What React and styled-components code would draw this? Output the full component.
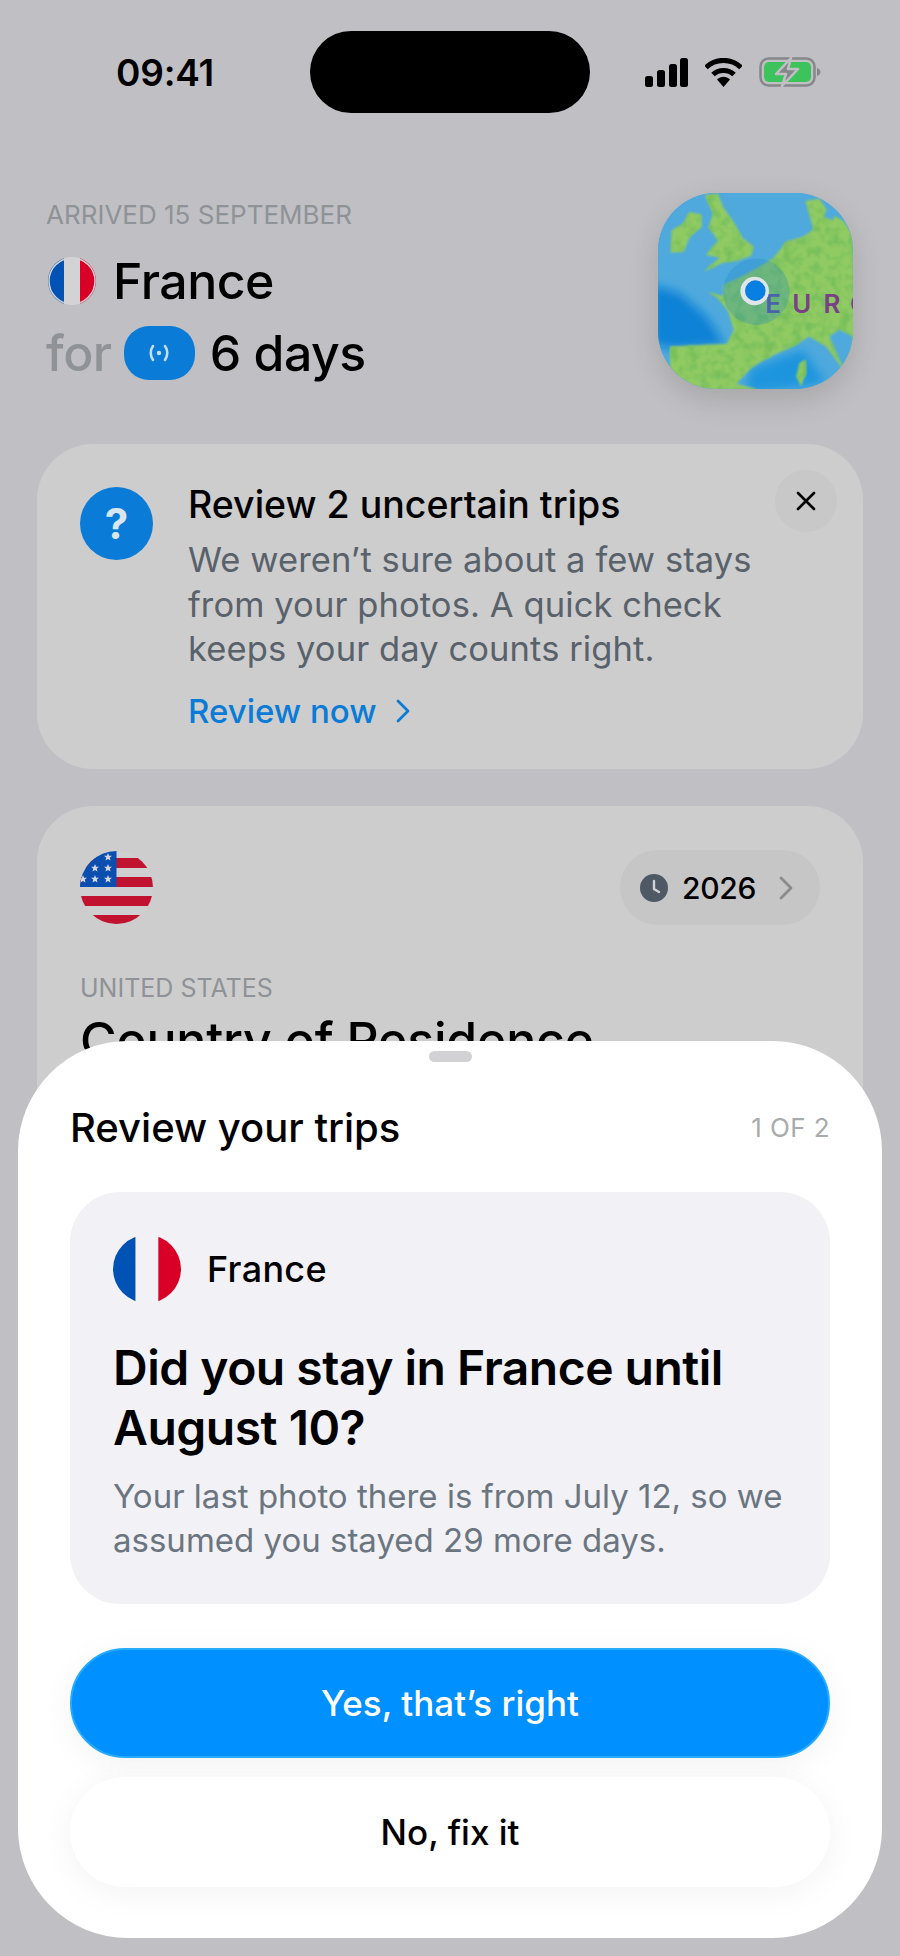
import styled, { createGlobalStyle } from "styled-components";

const GlobalStyle = createGlobalStyle`
  html, body {
    margin: 0;
    padding: 0;
    background: #c0c0c4;
  }
  * {
    box-sizing: border-box;
  }
`;

const Page = styled.div`
  position: relative;
  width: 900px;
  height: 1956px;
  overflow: hidden;
  background: #c0c0c4;
  color: #000;
  font-family: Inter, "Noto Sans", sans-serif;
`;

const StatusBar = styled.div`
  display: grid;
  grid-template-columns: 310px 280px 1fr;
  align-items: center;
  padding-top: 31px;
`;

const Time = styled.div`
  padding-left: 116px;
  font-size: 37px;
  font-weight: 600;
  letter-spacing: -0.2px;
`;

const Island = styled.div`
  height: 82px;
  border-radius: 41px;
  background: #000;
`;

const StatusIcons = styled.div`
  display: flex;
  align-items: center;
  gap: 17px;
  padding-left: 55px;
`;

const Header = styled.div`
  display: flex;
  justify-content: space-between;
  margin-top: 80px;
  padding: 0 47px 0 46px;
`;

const HeaderText = styled.div`
  padding-top: 10px;
`;

const Overline = styled.div`
  font-size: 26px;
  line-height: 24px;
  color: #8f9296;
`;

const BigRow = styled.div`
  display: flex;
  align-items: center;
  height: 54px;
  margin-top: ${(p) => p.$top}px;
  font-size: 50px;
  font-weight: 500;
  letter-spacing: -0.5px;
`;

const For = styled.span`
  color: #8f9296;
  margin-right: 12px;
`;

const Badge = styled.div`
  display: flex;
  align-items: center;
  justify-content: center;
  width: 71px;
  height: 54px;
  margin-right: 15px;
  border-radius: 25px;
  background: #0a7bd6;
`;

const FlagSlot = styled.div`
  display: flex;
  flex: none;
  margin-left: 2px;
  margin-right: 17px;
`;

const MapTile = styled.div`
  width: 195px;
  height: 196px;
  border-radius: 58px;
  overflow: hidden;
  box-shadow: 0 10px 30px rgba(0, 0, 0, 0.14);
  background: #4da9dc;
`;

const Card = styled.div`
  position: relative;
  margin: ${(p) => p.$top}px 37px 0;
  height: ${(p) => p.$height}px;
  border-radius: 56px;
  background: #cdcdcd;
`;

const BannerBody = styled.div`
  display: flex;
  gap: 35px;
  padding: 43px 0 0 43px;
`;

const HelpCircle = styled.div`
  display: flex;
  align-items: center;
  justify-content: center;
  flex: none;
  width: 73px;
  height: 73px;
  border-radius: 50%;
  background: #0a7bd6;
  color: #d8e6f2;
  font-size: 42px;
  font-weight: 700;
`;

const BannerText = styled.div`
  margin-top: -4px;
`;

const BannerTitle = styled.div`
  font-size: 37.500px;
  line-height: 44px;
  font-weight: 500;
`;

const BannerCopy = styled.div`
  margin-top: 11px;
  font-size: 34.500px;
  line-height: 44.500px;
  letter-spacing: 0.1px;
  color: #59616b;
`;

const ReviewLink = styled.div`
  display: flex;
  align-items: center;
  gap: 18px;
  margin-top: 17px;
  font-size: 33px;
  line-height: 44px;
  font-weight: 500;
  color: #0a7bd6;
`;

const CloseButton = styled.div`
  position: absolute;
  top: 26px;
  right: 26px;
  display: flex;
  align-items: center;
  justify-content: center;
  width: 62px;
  height: 62px;
  border-radius: 50%;
  background: #c8c8c9;
`;

const ResidenceBody = styled.div`
  padding: 44px 43px 0;
`;

const ResidenceTop = styled.div`
  display: flex;
  align-items: center;
  justify-content: space-between;
`;

const YearPill = styled.div`
  display: flex;
  align-items: center;
  width: 200px;
  height: 75px;
  padding-left: 20px;
  border-radius: 38px;
  background: #c6c6c7;
  font-size: 30px;
  font-weight: 500;
  letter-spacing: -0.3px;
`;

const YearText = styled.span`
  margin: 0 22px 0 14px;
`;

const ResidenceLabel = styled.div`
  margin: 51px 0 0;
  font-size: 25px;
  line-height: 24px;
  color: #8f9296;
`;

const ResidenceTitle = styled.div`
  margin: 12px 0 0;
  font-size: 50px;
  line-height: 56px;
  font-weight: 500;
  letter-spacing: -0.2px;
`;

const Sheet = styled.div`
  position: absolute;
  top: 1041px;
  left: 18px;
  width: 864px;
  height: 897px;
  padding: 10px 52px 0;
  border-radius: 110px;
  background: #fff;
`;

const Grabber = styled.div`
  width: 43px;
  height: 11px;
  margin: 0 auto 42px;
  border-radius: 6px;
  background: #d2d2d4;
`;

const SheetHeader = styled.div`
  display: flex;
  align-items: center;
  justify-content: space-between;
  height: 46px;
`;

const SheetTitle = styled.div`
  font-size: 40px;
  font-weight: 500;
`;

const Counter = styled.div`
  font-size: 26px;
  letter-spacing: 0.4px;
  color: #a8abae;
`;

const TripCard = styled.div`
  height: 412px;
  margin-top: 42px;
  padding: 43px 43px 0;
  border-radius: 50px;
  background: #f1f1f6;
`;

const TripCountry = styled.div`
  display: flex;
  align-items: center;
  gap: 26px;
  font-size: 36px;
  font-weight: 500;
  letter-spacing: 0.3px;
`;

const TripQuestion = styled.div`
  margin-top: 35px;
  font-size: 48px;
  line-height: 60px;
  font-weight: 600;
  letter-spacing: -0.5px;
`;

const TripNote = styled.div`
  margin-top: 17px;
  font-size: 33px;
  line-height: 43.500px;
  color: #6b7580;
`;

const Actions = styled.div`
  display: flex;
  flex-direction: column;
  gap: 19px;
  margin-top: 44px;
`;

const ActionButton = styled.div`
  display: flex;
  align-items: center;
  justify-content: center;
  height: 110px;
  border-radius: 55px;
  font-size: 35px;
  font-weight: 500;
  color: ${(p) => (p.$primary ? "#fff" : "#000")};
  background: ${(p) => (p.$primary ? "#0090ff" : "#fff")};
  border: ${(p) => (p.$primary ? "2px solid #25aaff" : "none")};
  box-shadow: 0 6px 34px rgba(0, 0, 0, 0.05);
`;

const SignalIcon = () => (
  <svg width="43" height="29" viewBox="0 0 43 29">
    <rect x="0" y="18" width="8" height="11" rx="2.500" />
    <rect x="12" y="12" width="8" height="17" rx="2.500" />
    <rect x="24" y="6" width="8" height="23" rx="2.500" />
    <rect x="35" y="0" width="8" height="29" rx="2.500" />
  </svg>
);

const WifiIcon = () => (
  <svg width="37" height="29" viewBox="0 0 37 29">
    <path d="M1 9.500C10.500 0 26.500 0 36 9.500" fill="none" stroke="#000" strokeWidth="5" />
    <path d="M8 16.500C13.500 11 23.500 11 29 16.500" fill="none" stroke="#000" strokeWidth="5" />
    <path d="M12 21.500C16 17.800 21 17.800 25 21.500L18.500 29Z" />
  </svg>
);

const BatteryIcon = () => (
  <svg width="62" height="30" viewBox="0 0 62 30">
    <rect x="1.500" y="1.500" width="54" height="27" rx="8" fill="none" stroke="#85878a" strokeWidth="2.500" />
    <rect x="5" y="5" width="47" height="20" rx="5" fill="#3dc35c" />
    <path d="M58 11C60.500 12 61.500 13.500 61.500 15C61.500 16.500 60.500 18 58 19Z" fill="#85878a" />
    <path d="M32 1L17 17H27L23 29L39 12H29Z" fill="#85878a" stroke="#c0c0c4" strokeWidth="2.500" strokeLinejoin="round" />
  </svg>
);

const BroadcastIcon = () => (
  <svg width="22" height="24" viewBox="0 0 22 24" fill="none" stroke="#c9dcee" strokeWidth="2.600" strokeLinecap="round">
    <path d="M5 5C2 9 2 15 5 19" />
    <path d="M17 5C20 9 20 15 17 19" />
    <circle cx="11" cy="12" r="2.200" fill="#c9dcee" stroke="none" />
  </svg>
);

const FranceFlag = ({ size, white = "#f2f2f6", ring }) => (
  <svg width={size} height={size} viewBox="0 0 48 48">
    <defs>
      <clipPath id={`fr-${size}`}>
        <circle cx="24" cy="24" r="24" />
      </clipPath>
    </defs>
    <g clipPath={`url(#fr-${size})`}>
      <rect width="16" height="48" fill="#0052b4" />
      <rect x="16" width="16" height="48" fill={white} />
      <rect x="32" width="16" height="48" fill="#d80027" />
    </g>
    {ring && <circle cx="24" cy="24" r="23" fill="none" stroke="#d3d3d6" strokeWidth="1.500" />}
  </svg>
);

const UsFlag = () => {
  const stars = [
    [28, 6],
    [15, 17],
    [28, 17],
    [3, 28],
    [15, 28],
    [28, 28],
  ];
  return (
    <svg width="73" height="73" viewBox="0 0 73 73">
      <defs>
        <clipPath id="us-clip">
          <circle cx="36.500" cy="36.500" r="36.500" />
        </clipPath>
      </defs>
      <g clipPath="url(#us-clip)">
        <rect width="73" height="73" fill="#cfcfd1" />
        <rect y="7" width="73" height="10" fill="#c1122f" />
        <rect y="26" width="73" height="10" fill="#c1122f" />
        <rect y="45" width="73" height="10" fill="#c1122f" />
        <rect y="64" width="73" height="9" fill="#c1122f" />
        <rect width="36.500" height="36" fill="#0a4fb0" />
        {stars.map(([x, y]) => (
          <path
            key={`${x}-${y}`}
            transform={`translate(${x} ${y})`}
            d="M0 -4L1.100 -1.300L4 -1.200L1.800 .6L2.500 3.400L0 1.900L-2.500 3.400L-1.800 .6L-4 -1.200L-1.100 -1.300Z"
            fill="#d6d6da"
          />
        ))}
      </g>
    </svg>
  );
};

const labelLetters = [
  ["E", 377, "#4a62a8"],
  ["U", 458, "#7a3f86"],
  ["R", 552, "#7a3f86"],
  ["O", 632, "#7a3f86"],
];

const EuropeMap = () => (
  <svg width="195" height="196" viewBox="55 68 585 590">
    <defs>
      <filter id="soft">
        <feGaussianBlur stdDeviation="3" />
      </filter>
      <filter id="softer">
        <feGaussianBlur stdDeviation="14" />
      </filter>
      <filter id="mottle" x="0" y="0" width="100%" height="100%" colorInterpolationFilters="sRGB">
        <feTurbulence type="fractalNoise" baseFrequency="0.035" numOctaves="2" seed="4" result="noise" />
        <feColorMatrix
          in="noise"
          type="matrix"
          values="0 0 0 0 0.47  0 0 0 0 0.75  0 0 0 0 0.36  0 0 0 3 -1.300"
          result="patches"
        />
        <feGaussianBlur in="SourceGraphic" stdDeviation="2.500" result="land" />
        <feComposite in="patches" in2="land" operator="in" result="inked" />
        <feMerge>
          <feMergeNode in="land" />
          <feMergeNode in="inked" />
        </feMerge>
      </filter>
    </defs>
    <rect x="55" y="68" width="585" height="590" fill="#4fa9dd" />
    <g filter="url(#softer)">
      <path d="M40 345L120 370L200 440L255 525L100 535L40 525Z" fill="#0d82d6" />
      <path d="M330 600L430 560L490 540L560 640L320 670Z" fill="#1f95de" />
    </g>
    <g filter="url(#mottle)" fill="#8fca62">
      <path d="M95 180L130 160L148 125L185 132L186 170L150 200L132 245L92 248Z" />
      <path d="M195 75L235 70L250 110L285 160L310 205L342 228L335 258L290 272L250 278L190 305L240 262L198 255L235 212L206 170L220 130Z" />
      <path d="M203 365L250 378L252 345L300 322L345 298L400 265L440 215L490 200L522 178L498 92L540 85L570 130L610 150L640 190L650 610L610 598L560 530L510 500L460 530L420 548L375 570L335 595L290 642L360 660L90 660L90 530L262 522L282 480L265 425L235 385Z" />
      <path d="M480 580L498 570L500 610L485 650L470 620Z" />
    </g>
    <path d="M560 118L590 125L580 150L555 140Z" fill="#4fa9dd" filter="url(#soft)" />
    <path d="M610 120L625 130L612 148L600 135Z" fill="#4fa9dd" filter="url(#soft)" />
    <path d="M570 500L600 480L640 500L640 600L610 590Z" fill="#4fa9dd" filter="url(#soft)" />
    <circle cx="350" cy="365" r="100" fill="#1a86c8" fillOpacity="0.28" />
    {labelLetters.map(([letter, x, color]) => (
      <text key={letter} x={x} y="430" fontFamily="Inter, sans-serif" fontSize="78" fontWeight="600" fill={color}>
        {letter}
      </text>
    ))}
    <circle cx="345" cy="363" r="43" fill="#dfe6ea" />
    <circle cx="347" cy="362" r="31" fill="#0a7fe2" />
  </svg>
);

const CloseIcon = () => (
  <svg width="22" height="22" viewBox="0 0 22 22" fill="none" stroke="#000" strokeWidth="2.600" strokeLinecap="round">
    <path d="M3 3L19 19M19 3L3 19" />
  </svg>
);

const Chevron = ({ color }) => (
  <svg width="16" height="28" viewBox="0 0 16 28" fill="none" stroke={color} strokeWidth="2.800" strokeLinecap="round" strokeLinejoin="round">
    <path d="M3 4L13 14L3 24" />
  </svg>
);

const ClockIcon = () => (
  <svg width="28" height="28" viewBox="0 0 28 28">
    <circle cx="14" cy="14" r="14" fill="#4f5965" />
    <path d="M14 7V15L19 18" fill="none" stroke="#cfd2d4" strokeWidth="2.400" strokeLinecap="round" />
  </svg>
);

export default function App() {
  return (
    <Page>
      <GlobalStyle />
      <StatusBar>
        <Time>09:41</Time>
        <Island />
        <StatusIcons>
          <SignalIcon />
          <WifiIcon />
          <BatteryIcon />
        </StatusIcons>
      </StatusBar>

      <Header>
        <HeaderText>
          <Overline>ARRIVED 15 SEPTEMBER</Overline>
          <BigRow $top={27}>
            <FlagSlot>
              <FranceFlag size={48} white="#d3d3d6" ring />
            </FlagSlot>
            France
          </BigRow>
          <BigRow $top={18}>
            <For>for</For>
            <Badge>
              <BroadcastIcon />
            </Badge>
            6 days
          </BigRow>
        </HeaderText>
        <MapTile>
          <EuropeMap />
        </MapTile>
      </Header>

      <Card $top={55} $height={325}>
        <BannerBody>
          <HelpCircle>?</HelpCircle>
          <BannerText>
            <BannerTitle>Review 2 uncertain trips</BannerTitle>
            <BannerCopy>
              We weren’t sure about a few stays
              <br />
              from your photos. A quick check
              <br />
              keeps your day counts right.
            </BannerCopy>
            <ReviewLink>
              Review now
              <Chevron color="#0a7bd6" />
            </ReviewLink>
          </BannerText>
        </BannerBody>
        <CloseButton>
          <CloseIcon />
        </CloseButton>
      </Card>

      <Card $top={37} $height={500}>
        <ResidenceBody>
          <ResidenceTop>
            <UsFlag />
            <YearPill>
              <ClockIcon />
              <YearText>2026</YearText>
              <Chevron color="#8a8a8a" />
            </YearPill>
          </ResidenceTop>
          <ResidenceLabel>UNITED STATES</ResidenceLabel>
          <ResidenceTitle>Country of Residence</ResidenceTitle>
        </ResidenceBody>
      </Card>

      <Sheet>
        <Grabber />
        <SheetHeader>
          <SheetTitle>Review your trips</SheetTitle>
          <Counter>1 OF 2</Counter>
        </SheetHeader>
        <TripCard>
          <TripCountry>
            <FranceFlag size={68} />
            France
          </TripCountry>
          <TripQuestion>
            Did you stay in France until
            <br />
            August 10?
          </TripQuestion>
          <TripNote>
            Your last photo there is from July 12, so we
            <br />
            assumed you stayed 29 more days.
          </TripNote>
        </TripCard>
        <Actions>
          <ActionButton $primary>Yes, that’s right</ActionButton>
          <ActionButton>No, fix it</ActionButton>
        </Actions>
      </Sheet>
    </Page>
  );
}
